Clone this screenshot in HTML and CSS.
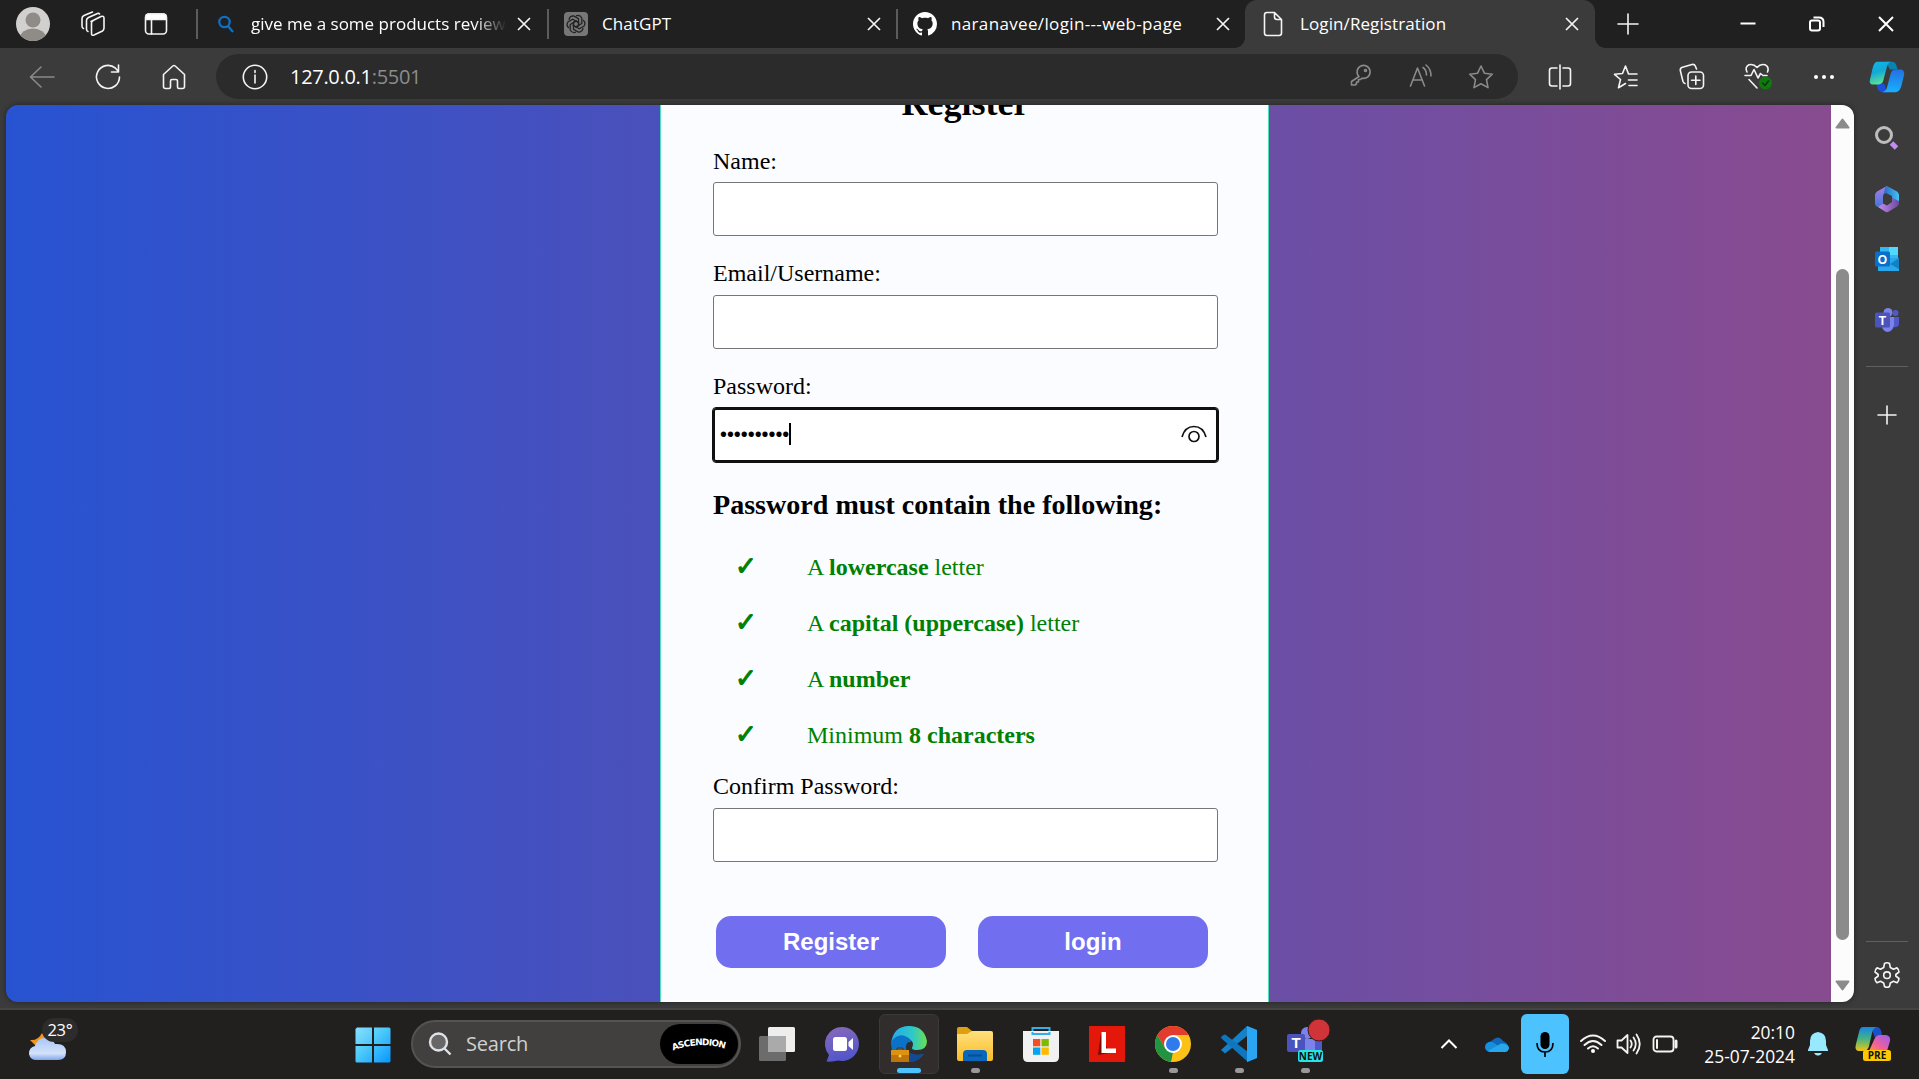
FILE: index.html
```html
<!DOCTYPE html>
<html lang="en">
<head>
<meta charset="utf-8">
<title>Login/Registration</title>
<link rel="stylesheet" href="styles.css">
</head>
<body>
<div class="desktop">
  <header class="tabstrip">
    <div class="strip-tools">
      <svg class="avatar" width="34" height="34" viewBox="0 0 34 34"><defs><clipPath id="av"><circle cx="17" cy="17" r="17"/></clipPath></defs><g clip-path="url(#av)"><rect width="34" height="34" fill="#d2d0ce"/><circle cx="17" cy="13" r="7.500" fill="#8f8b87"/><ellipse cx="17" cy="31" rx="13" ry="9.500" fill="#8f8b87"/></g></svg>
      <svg class="line" width="26" height="26" viewBox="0 0 26 26"><path d="M11 10.500 21 5.500Q24 4.500 24 7V17Q24 19 22.500 20L14 24Q11.500 25 11.500 22.500V12Q11.500 10.500 13 9.800M8 20.500Q6.500 20 6.500 18V9.500Q6.500 7.500 8.500 6.500L17.500 2.500Q19 2 19.500 3M3.500 17.500Q2 17 2 15V7.500Q2 5.500 4 4.500L12.500 1"/></svg>
      <svg class="line" width="24" height="24" viewBox="0 0 24 24"><rect x="1.500" y="2" width="21" height="20" rx="3.500"/><path d="M2 4Q2 2 5 2H19Q22 2 22 4V7.500H2Z" fill="#fff"/><path d="M7.500 8V22"/></svg>
    </div>
    <div class="tab tab-first">
      <svg width="16" height="18" viewBox="0 0 16 18" fill="none" stroke="#0f6fc5" stroke-width="2.300"><circle cx="6.500" cy="7" r="5.200"/><path d="M10 11 15 17"/></svg>
      <span class="tab-title fade">give me a some products review</span>
      <svg class="close" width="14" height="14" viewBox="0 0 14 14"><path d="M1 1 13 13M13 1 1 13"/></svg>
    </div>
    <div class="tab">
      <svg width="24" height="24" viewBox="0 0 24 24"><rect width="24" height="24" rx="4" fill="#777"/><g fill="none" stroke="#222" stroke-width="1.300"><path id="petal" d="M12 3.800Q16 2.500 17.800 6V11.500L12 15 9 13"/><use href="#petal" transform="rotate(60 12 12)"/><use href="#petal" transform="rotate(120 12 12)"/><use href="#petal" transform="rotate(180 12 12)"/><use href="#petal" transform="rotate(240 12 12)"/><use href="#petal" transform="rotate(300 12 12)"/></g></svg>
      <span class="tab-title">ChatGPT</span>
      <svg class="close" width="14" height="14" viewBox="0 0 14 14"><path d="M1 1 13 13M13 1 1 13"/></svg>
    </div>
    <div class="tab">
      <svg width="24" height="24" viewBox="0 0 16 16"><path fill="#fff" d="M8 0C3.580 0 0 3.580 0 8c0 3.540 2.290 6.530 5.470 7.590.4.070.55-.17.55-.38 0-.19-.01-.82-.01-1.490-2.010.37-2.530-.49-2.690-.94-.09-.23-.48-.94-.82-1.130-.28-.15-.68-.52-.01-.53.63-.01 1.080.58 1.230.82.72 1.210 1.870.87 2.330.66.07-.52.28-.87.51-1.070-1.780-.2-3.640-.89-3.640-3.950 0-.87.31-1.590.82-2.150-.08-.2-.36-1.020.08-2.120 0 0 .67-.21 2.200.82.64-.18 1.320-.27 2-.27s1.360.09 2 .27c1.530-1.040 2.200-.82 2.200-.82.44 1.100.16 1.920.08 2.120.51.56.82 1.270.82 2.150 0 3.070-1.870 3.750-3.650 3.950.29.25.54.73.54 1.480 0 1.070-.01 1.930-.01 2.200 0 .21.15.46.55.38A8.010 8.010 0 0 0 16 8c0-4.420-3.580-8-8-8z"/></svg>
      <span class="tab-title repo">naranavee/login---web-page</span>
      <svg class="close" width="14" height="14" viewBox="0 0 14 14"><path d="M1 1 13 13M13 1 1 13"/></svg>
    </div>
    <div class="tab active">
      <svg class="line" width="20" height="26" viewBox="0 0 20 26"><path d="M3.500 1.500H11.500L18.500 8.500V22Q18.500 24.500 16 24.500H4Q1.500 24.500 1.500 22V4Q1.500 1.500 4 1.500M11.500 2V6Q11.500 8.500 14 8.500H18"/></svg>
      <span class="tab-title">Login/Registration</span>
      <svg class="close" width="14" height="14" viewBox="0 0 14 14"><path d="M1 1 13 13M13 1 1 13"/></svg>
    </div>
    <svg class="newtab line" width="22" height="22" viewBox="0 0 22 22"><path d="M11 1V21M1 11H21"/></svg>
    <div class="window-buttons">
      <svg width="16" height="16" viewBox="0 0 16 16"><path d="M.5 7.500H15.500" stroke="#fff" stroke-width="2"/></svg>
      <svg class="bold-line" width="16" height="16" viewBox="0 0 16 16"><rect x="1" y="4.500" width="10" height="10" rx="2"/><path d="M4.500 1.500H10Q14.500 1.500 14.500 6V11"/></svg>
      <svg class="bold-line" width="16" height="16" viewBox="0 0 16 16"><path d="M1 1 15 15M15 1 1 15"/></svg>
    </div>
  </header>

  <nav class="toolbar">
    <div class="slot"><svg class="line dim" width="26" height="24" viewBox="0 0 26 24"><path d="M25 12H2M12 2 1.500 12 12 22"/></svg></div>
    <div class="slot"><svg class="line" width="26" height="26" viewBox="0 0 26 26"><path d="M24.500 13A11.500 11.500 0 1 1 20.500 4.200L23 7M23.500 1V8H16.500"/></svg></div>
    <div class="slot"><svg class="line" width="24" height="26" viewBox="0 0 24 26"><path d="M1.500 10.500 10.800 2Q12 1 13.200 2L22.500 10.500V22.500Q22.500 24.500 20.500 24.500H17Q15.500 24.500 15.500 23V17Q15.500 15.500 14 15.500H10Q8.500 15.500 8.500 17V23Q8.500 24.500 7 24.500H3.500Q1.500 24.500 1.500 22.500Z"/></svg></div>
    <div class="address">
      <svg class="line" width="26" height="26" viewBox="0 0 26 26"><circle cx="13" cy="13" r="11.700"/><path d="M13 11V19M13 6.500V8.500"/></svg>
      <span class="url">127.0.0.1<span class="port">:5501</span></span>
      <div class="address-tools">
        <div><svg class="line dim" width="22" height="22" viewBox="0 0 22 22"><path d="M9 12.500A6.500 6.500 0 1 1 12 14.200L10.500 15.500H8.500V18H6.500V20L5 21H1.500V17.500Z"/><circle cx="15.500" cy="6.500" r="1"/></svg></div>
        <div><svg class="line dim" width="24" height="24" viewBox="0 0 24 24"><path d="M1.500 22 8.500 4 15.500 22M4 16H13M14 3.500Q17.500 6 17.500 11M17 1Q22 5 22 12"/></svg></div>
        <div><svg class="line dim" width="26" height="26" viewBox="0 0 26 26"><path d="M13 2 16.400 9.200 24.300 10.200 18.500 15.700 20 23.600 13 19.800 6 23.600 7.500 15.700 1.700 10.200 9.600 9.200Z"/></svg></div>
      </div>
    </div>
    <div class="slot"><svg class="line" width="24" height="26" viewBox="0 0 24 26"><path d="M12 1V25M9 4H4Q1.500 4 1.500 6.500V19.500Q1.500 22 4 22H9M15 4H20Q22.500 4 22.500 6.500V19.500Q22.500 22 20 22H15"/></svg></div>
    <div class="slot"><svg class="line" width="26" height="26" viewBox="0 0 26 26"><path d="M24 10H15.500L12.500 2 9.500 9.500 1.500 10.300 7.500 15.500 5.500 23.800 12.500 19.500M15.500 16H24M16 21.500H24"/></svg></div>
    <div class="slot"><svg class="line" width="26" height="27" viewBox="0 0 26 27"><rect x="9" y="9" width="15.500" height="16.500" rx="3.500"/><path d="M16.800 13V21.500M12.500 17.300H21M6 20.500Q4.500 20 4 18.500L1.300 7.500Q1 5 3.500 4.300L13 1.500Q15.500 1 16.300 3L17.500 6"/></svg></div>
    <div class="slot"><svg class="line" width="28" height="27" viewBox="0 0 28 27"><path d="M3 9Q.5 4 5 1.800 9.500.5 13 4.500 16.500.5 21 1.800 25.500 4 23.500 9M1 12.500H7L10 6.500 14 15 16.500 10.500 19 12.500H23M5 16.500 13 25"/><circle cx="21.500" cy="20" r="6.500" fill="#0f7b0f" stroke="none"/><path d="M18.500 20 21 22.500 24.500 18" stroke="#0a3a0a"/></svg></div>
    <div class="slot"><svg width="22" height="6" viewBox="0 0 22 6" fill="#fff"><circle cx="3" cy="3" r="2"/><circle cx="11" cy="3" r="2"/><circle cx="19" cy="3" r="2"/></svg></div>
    <div class="slot last"><svg width="36" height="34" viewBox="0 0 38 34"><defs><linearGradient id="cp1" x2=".3" y2="1"><stop stop-color="#12b4ec"/><stop offset=".5" stop-color="#12a9d5"/><stop offset="1" stop-color="#5be095"/></linearGradient><linearGradient id="cp2" x2="0" y2="1"><stop stop-color="#2370e0"/><stop offset="1" stop-color="#18b0ff"/></linearGradient></defs><path d="M18 1H24Q28 1 29 5L30 9H22Z" fill="#0784b4"/><path d="M19 33H14Q10 33 9 29L8 24H16Z" fill="#1b50dd"/><path d="M9 1H23Q20 2 19 6L15 21Q14 25 9 25H4Q0 25 1 20L4 7Q5.500 1 9 1Z" fill="url(#cp1)"/><path d="M28 9H33Q38 9 37 15L34 27Q32 33 28 33H14Q18 32 19 28L23 13Q24 9 28 9Z" fill="url(#cp2)"/></svg></div>
  </nav>

  <main class="browser-body">
    <div class="viewport">
      <div class="page">
        <form class="card">
          <h2>Register</h2>
          <div class="field"><label>Name:</label><div class="input"></div></div>
          <div class="field raised"><label>Email/Username:</label><div class="input"></div></div>
          <div class="field raised"><label>Password:</label><div class="input focused"><span class="dots">••••••••••</span><svg width="26" height="18" viewBox="0 0 26 18" fill="none" stroke="#111" stroke-width="1.700"><path d="M1 12Q4 1.500 13 1.500T25 12"/><circle cx="13" cy="11.500" r="5"/></svg></div></div>
          <h3>Password must contain the following:</h3>
          <ul class="rules">
            <li><span>A <b>lowercase</b> letter</span></li>
            <li><span>A <b>capital (uppercase)</b> letter</span></li>
            <li><span>A <b>number</b></span></li>
            <li><span>Minimum <b>8 characters</b></span></li>
          </ul>
          <div class="field raised"><label>Confirm Password:</label><div class="input"></div></div>
          <div class="actions"><button type="button">Register</button><button type="button">login</button></div>
        </form>
      </div>
      <div class="scrollbar">
        <svg width="15" height="11" viewBox="0 0 15 11"><path d="M7.500 1.500 13.500 9.500H1.500Z" fill="#8b8b8b" stroke="#8b8b8b" stroke-width="2" stroke-linejoin="round"/></svg>
        <div class="thumb"></div>
        <svg width="15" height="11" viewBox="0 0 15 11"><path d="M7.500 9.500 13.500 1.500H1.500Z" fill="#8b8b8b" stroke="#8b8b8b" stroke-width="2" stroke-linejoin="round"/></svg>
      </div>
    </div>
    <aside class="sidebar">
      <div class="side-slot"><svg width="26" height="26" viewBox="0 0 26 26" fill="none"><circle cx="10" cy="10" r="7.500" stroke="#bdbdbd" stroke-width="3"/><path d="M17.500 18 22.500 23" stroke="#c28cf0" stroke-width="5"/></svg></div>
      <div class="side-slot"><svg width="26" height="28" viewBox="0 0 26 28"><defs><linearGradient id="ma" x2="0" y2="1"><stop stop-color="#b07be6"/><stop offset="1" stop-color="#3e79d8"/></linearGradient><linearGradient id="mb"><stop stop-color="#2c66c4"/><stop offset="1" stop-color="#3fc3f5"/></linearGradient><linearGradient id="mc"><stop stop-color="#c58bf0"/><stop offset="1" stop-color="#6b4a9c"/></linearGradient></defs><path d="M13 1 3 6.500Q1 8 1 10V18Q1 21 4 22L9 19V11Q9 9 13 6Z" fill="url(#ma)"/><path d="M13 1 23 6.500Q25 8 25 10V17L18 13V11L12 8 9.500 9.500 11 3Z" fill="url(#mb)"/><path d="M4 22 9 18.500 13 20.500 18 17V13L25 16V18Q25 20 23 21.500L14 27Q12.500 27.500 11 26.500Z" fill="url(#mc)"/></svg></div>
      <div class="side-slot"><svg width="24" height="24" viewBox="0 0 24 24"><rect x="5" y="0" width="18" height="15" fill="#35b8f1"/><path d="M14 0H23V8H14Z" fill="#50d9ff"/><path d="M3 11H24V24H3Z" fill="#28a8ea"/><path d="M24 11V22L15 17Z" fill="#1180c4"/><rect x="0" y="4.500" width="15" height="15" rx="1.500" fill="#0a6fc9"/><text x="7.500" y="16.500" class="glyph">O</text></svg></div>
      <div class="side-slot"><svg width="24" height="24" viewBox="0 0 24 24"><circle cx="13" cy="4.500" r="4.500" fill="#7b83eb"/><circle cx="20.500" cy="5" r="3" fill="#5059c9"/><path d="M17 9H24V16Q23 20 18 19Z" fill="#5059c9"/><path d="M7 9H19V17Q18 23.500 12 24 8 23 7 19Z" fill="#7b83eb"/><rect x="0" y="4.500" width="15" height="15" rx="1.500" fill="#4b53bc"/><text x="7.500" y="16.500" class="glyph">T</text></svg></div>
      <hr>
      <div class="side-plus"><svg class="line" width="18" height="18" viewBox="0 0 18 18"><path d="M9 0V18M0 9H18"/></svg></div>
      <hr class="bottom-rule">
      <div class="side-gear"><svg class="line" width="26" height="28" viewBox="0 0 26 28"><path d="M10.500 2.500Q13 1 15.500 2.500L16.300 6.500 19.500 8.300 23 6.800Q25 8.500 25 11L21.800 13.500V15L25 17.500Q25 20 23 21.800L19.500 20.200 16.300 22 15.500 25.500Q13 27 10.500 25.500L9.700 22 6.500 20.200 3 21.800Q1 20 1 17.500L4.200 15V13.500L1 11Q1 8.500 3 6.800L6.500 8.300 9.700 6.500Z"/><circle cx="13" cy="14.200" r="3.300"/></svg></div>
    </aside>
  </main>

  <footer class="taskbar">
    <div class="weather">
      <svg width="38" height="30" viewBox="0 0 38 30"><defs><linearGradient id="cl" x2="0" y2="1"><stop stop-color="#a9c6f6"/><stop offset=".7" stop-color="#d3e2fb"/><stop offset="1" stop-color="#82a5e8"/></linearGradient></defs><path d="M1 8Q9 9 13 1 19 8 15 15L7 14Z" fill="#f2951c"/><path d="M8 28A7 7 0 0 1 6 14Q9 5 17 6 24 7 26 12 37 11 37 20 37 28 29 28Z" fill="url(#cl)"/></svg>
      <span class="temp">23°</span>
    </div>
    <svg class="start" width="36" height="36" viewBox="0 0 36 36"><defs><linearGradient id="win" x2="1" y2="1"><stop stop-color="#8be0ff"/><stop offset=".45" stop-color="#4cc9fa"/><stop offset="1" stop-color="#0896ff"/></linearGradient></defs><path d="M2 .5H17V17H.5V2ZM19 .5H34Q35.500.5 35.500 2V17H19ZM.5 19H17V35.500H2Q.5 35.500.5 34ZM19 19H35.500V34Q35.500 35.500 34 35.500H19Z" fill="url(#win)"/></svg>
    <div class="search">
      <svg width="24" height="24" viewBox="0 0 24 24" fill="#686666" stroke="#dfe3e8" stroke-width="2.400"><circle cx="10.500" cy="10" r="8.500"/><path d="M16.500 16.500 22.500 22.500"/></svg>
      <span>Search</span>
      <svg class="brand" width="78" height="40" viewBox="0 0 78 40"><rect width="78" height="40" rx="20"/><path id="arc" d="M13 26.500Q39 16.500 66 25" fill="none"/><text class="brand-text"><textPath href="#arc" textLength="53">ASCENDION</textPath></text></svg>
    </div>
    <div class="apps">
      <div class="app"><svg width="36" height="36" viewBox="0 0 36 36"><rect x="9" y="1" width="27" height="25" rx="1.500" fill="#eee"/><rect x="0" y="10" width="27" height="25" rx="1.500" fill="#6c6c6c"/><path d="M9 10H27V26H9Z" fill="#aaa"/></svg></div>
      <div class="app"><svg width="36" height="36" viewBox="0 0 36 36"><defs><linearGradient id="ch" x2=".3" y2="1"><stop stop-color="#8a6ab8"/><stop offset="1" stop-color="#5356cb"/></linearGradient></defs><path d="M18 1A17 17 0 1 1 13 34.500Q8 36 1.500 35.500L4 29A17 17 0 0 1 18 1Z" fill="url(#ch)"/><rect x="8" y="11" width="14" height="14" rx="2.500" fill="#fff"/><path d="M23.500 16 28 12V24L23.500 20Z" fill="#fff"/></svg></div>
      <div class="app current"><svg width="36" height="36" viewBox="0 0 36 36"><defs><linearGradient id="ed"><stop stop-color="#24a9ec"/><stop offset=".6" stop-color="#2fc8c8"/><stop offset="1" stop-color="#6be04e"/></linearGradient></defs><path d="M0 18Q2 0 18 0 33 0 36 15 36 24 26 24 21 24 21 22 24 16 18 13 9 8 0 18Z" fill="url(#ed)"/><path d="M0 16Q7 6 16 11 20 13 20 16 14 15 15 24 20 31 33 28 26 37 16 36 0 34 0 16Z" fill="#0a73c8"/><path d="M15 20Q16 31 33 28 26 37 17 36Z" fill="#124a93"/><rect y="24" width="18" height="12" fill="#bd740c"/><rect y="24" width="18" height="5" fill="#de920f"/><circle cx="9" cy="30" r="1.500" fill="#ffd83d"/><path d="M6 24V22H12V24" fill="none" stroke="#5d3305"/></svg></div>
      <div class="app running"><svg width="36" height="36" viewBox="0 0 36 36"><defs><linearGradient id="fo" x2="0" y2="1"><stop stop-color="#ffe07c"/><stop offset="1" stop-color="#fabc28"/></linearGradient></defs><path d="M0 3Q0 1 2 1H10L15 5V12H0Z" fill="#dda012"/><path d="M0 8H10L15 5H34Q36 5 36 7V33Q36 35 34 35H2Q0 35 0 33Z" fill="url(#fo)"/><path d="M6 35V28Q6 24 10 24H26Q30 24 30 28V35Z" fill="#0a68bc"/><path d="M11 29.500H25" stroke="#064d91" stroke-width="2"/></svg></div>
      <div class="app"><svg width="36" height="36" viewBox="0 0 36 36"><path d="M9.500 8V2H26.500V8" fill="none" stroke="#35aee8" stroke-width="2"/><path d="M0 5H36V31Q36 36 31 36H5Q0 36 0 31Z" fill="#f1f1f1"/><path d="M9.500 6V8H26.500V6" fill="none" stroke="#35aee8" stroke-width="2"/><path d="M10 13H17.300V20.300H10Z" fill="#f25022"/><path d="M18.500 13H25.800V20.300H18.500Z" fill="#7fba00"/><path d="M10 21.500H17.300V28.800H10Z" fill="#00a4ef"/><path d="M18.500 21.500H25.800V28.800H18.500Z" fill="#ffb900"/></svg></div>
      <div class="app"><svg width="36" height="36" viewBox="0 0 36 36"><path d="M0 0H36V36H0Z" fill="#e3170a"/><path d="M12 7 9 29 20 27Z" fill="#7c0905"/><path d="M12.500 6H17V22.500H27V27H12.500Z" fill="#fff"/></svg></div>
      <div class="app running"><svg width="36" height="36" viewBox="0 0 36 36"><circle cx="18" cy="18" r="18" fill="#fbc116"/><path d="M2.400 9A18 18 0 0 1 33.600 9H18L10.200 22.500Z" fill="#e33b2e"/><path d="M2.400 9 10.200 22.500 18 27 16.500 36A18 18 0 0 1 2.400 9Z" fill="#229342"/><path d="M18 27 25.800 22.500 18 36H16Z" fill="#fbc116"/><circle cx="18" cy="18" r="9" fill="#fff"/><circle cx="18" cy="18" r="7" fill="#2f7bee"/></svg></div>
      <div class="app running"><svg width="36" height="36" viewBox="0 0 36 36"><path d="M26 0 36 4V32L26 36V27L4 9 0 12Q-.5 10 4 8.500L26 26Z" fill="#0b78c0"/><path d="M0 24 26 0V10L4 27.500Z" fill="#1481c9"/><path d="M0 12 4 8.500 27 26V36Z" fill="#0d76bf"/><path d="M26 0 36 4V32L26 36Z" fill="#29a5f3"/></svg></div>
      <div class="app running teams"><svg width="46" height="44" viewBox="0 0 46 44"><circle cx="20" cy="14" r="6" fill="#7b83eb"/><rect x="18" y="20" width="17" height="14" fill="#7b83eb"/><rect x="28" y="20" width="7" height="12" fill="#5059c9"/><rect y="15" width="18" height="18" rx="2" fill="#4b53bc"/><text x="9" y="29" class="glyph large">T</text><circle cx="32" cy="11" r="11" fill="#d13438" stroke="#3c1b1c"/><rect x="11" y="31" width="25" height="12" rx="2.500" fill="#28e5e5"/><text x="23.500" y="40.500" class="badge-text">NEW</text></svg></div>
    </div>
    <div class="tray">
      <svg class="chevron bold-line" width="18" height="12" viewBox="0 0 18 12"><path d="M1.500 10 9 2.500 16.500 10"/></svg>
      <svg class="cloud" width="24" height="17" viewBox="0 0 24 17"><path d="M5 16A5 5 0 0 1 3 6.500Q7 5 9 3 14-1 18 5 23 7 24 12 23 16 20 16Z" fill="#0f67b8"/><path d="M1 8Q5 4 10 7.500L20 16H5Q-2 14 1 8Z" fill="#1490df"/><path d="M3 15 16 7.500Q23 7 24 12 23 16 20 16H5Z" fill="#28a8ea"/></svg>
      <div class="mic"><svg width="18" height="25" viewBox="0 0 18 25"><rect x="4.500" width="9" height="17" rx="4.500"/><path d="M1 11Q1 20 9 20T17 11M9 20V25" fill="none" stroke="#000" stroke-width="1.700"/></svg></div>
      <div class="status">
        <svg class="line" width="26" height="20" viewBox="0 0 26 20"><path d="M1 7Q13-4 25 7M4.500 11Q13 3 21.500 11M8 14.500Q13 10 18 14.500" stroke-width="2"/><circle cx="13" cy="17" r="2" fill="#fff" stroke="none"/></svg>
        <svg class="line" width="26" height="22" viewBox="0 0 26 22"><path d="M1.500 7.500H5.500L11.500 2V20L5.500 14.500H1.500ZM14.500 7.500Q17 11 14.500 14.500M17.500 4.500Q22 11 17.500 17.500M20.500 1.500Q27 11 20.500 20.500" stroke-width="1.800"/></svg>
        <svg class="line" width="26" height="18" viewBox="0 0 26 18"><rect x="1.500" y="1.500" width="20" height="15" rx="3" stroke-width="1.800"/><path d="M5 5V13" stroke-width="2"/><path d="M24 6V12" stroke-width="3"/></svg>
      </div>
      <div class="clock"><span>20:10</span><span>25-07-2024</span></div>
      <svg class="bell" width="20" height="24" viewBox="0 0 20 24" fill="#98e8ff"><path d="M10 0Q18 1 18 9V13L20 18V19H0V18L2 13V9Q2 1 10 0ZM6 21H14Q12 24 10 23.500 8 24 6 21Z"/></svg>
      <svg class="pre" width="36" height="36" viewBox="0 0 36 36"><defs><linearGradient id="p1" x2="0" y2="1"><stop stop-color="#1685ea"/><stop offset=".5" stop-color="#45b480"/><stop offset="1" stop-color="#f2c514"/></linearGradient><linearGradient id="p2" x1="1" x2="0" y2="1"><stop stop-color="#9b5cf2"/><stop offset=".6" stop-color="#f0609b"/><stop offset="1" stop-color="#ff923c"/></linearGradient></defs><path d="M16 1H22Q26 1 27 9L20 12Z" fill="#1d4fc9"/><path d="M8 1H22Q18 2 17 7L14 20Q13 25 8 25H4Q-1 25 1 18L4 6Q5 1 8 1Z" fill="url(#p1)"/><path d="M25 9H31Q36 10 35 15L32 25H14L19 14Q21 9 25 9Z" fill="url(#p2)"/><rect x="8" y="24" width="28" height="11" rx="2.500" fill="#ffc800"/><text x="22" y="33" class="badge-text">PRE</text></svg>
    </div>
  </footer>
</div>
</body>
</html>
```
FILE: styles.css
```css
* { box-sizing: border-box; }
body { margin: 0; overflow: hidden; font-family: "Open Sans", "Noto Sans", sans-serif; color: #fff; }
svg { display: block; flex: none; overflow: visible; }
.desktop { width: 1919px; height: 1079px; display: flex; flex-direction: column; background: #3b3b3b; }
.line { fill: none; stroke: #f4f4f4; stroke-width: 1.6; stroke-linejoin: round; stroke-linecap: round; }
.line.dim { stroke: #8a8a8a; }
.bold-line { fill: none; stroke: #fff; stroke-width: 2; }

/* Tab strip */
.tabstrip { height: 48px; flex: none; display: flex; align-items: center; background: #202020; }
.strip-tools { width: 196px; padding-left: 16px; display: flex; align-items: center; gap: 30px; }
.strip-tools svg:last-child { margin-left: 8px; }
.tab { width: 349px; height: 30px; padding: 0 15px 0 15px; display: flex; align-items: center; gap: 14px; border-left: 2px solid #5c5c5c; font-size: 17px; }
.tab-first { width: 351px; padding-left: 20px; padding-right: 16px; gap: 8px; }
.tab-first .tab-title { padding-left: 9px; letter-spacing: 0; }
.tab-title { flex: 1; white-space: nowrap; line-height: 28px; letter-spacing: 0.1px; }
.tab-title.repo { letter-spacing: 0.35px; }
.fade { -webkit-mask-image: linear-gradient(to right, #000 87%, transparent 99%); mask-image: linear-gradient(to right, #000 87%, transparent 99%); }
.close { fill: none; stroke: #f4f4f4; stroke-width: 1.7; }
.active { position: relative; width: 350px; height: 48px; padding: 0 16px 0 18px; gap: 17px; border: 0; border-radius: 12px 12px 0 0; background: #3b3b3b; }
.active::before, .active::after { content: ""; position: absolute; bottom: 0; width: 10px; height: 10px; }
.active::before { left: -10px; background: radial-gradient(circle at 0 0, #202020 9.5px, #3b3b3b 10px); }
.active::after { right: -10px; background: radial-gradient(circle at 100% 0, #202020 9.5px, #3b3b3b 10px); }
.newtab { margin-left: 22px; }
.window-buttons { margin-left: auto; margin-right: 25px; display: flex; gap: 53px; }

/* Toolbar */
.toolbar { height: 57px; flex: none; display: flex; align-items: center; padding-left: 9px; }
.slot { width: 66px; display: flex; justify-content: center; }
.slot.last { width: 60px; }
.address { width: 1302px; height: 45px; margin: 0 9px; padding: 0 7px 0 26px; display: flex; align-items: center; border-radius: 23px; background: #2b2b2b; }
.url { flex: 1; padding-left: 22px; font-size: 20px; line-height: 28px; letter-spacing: -0.3px; }
.port { color: #8c8c8c; }
.address-tools { display: flex; }
.address-tools div { width: 60px; display: flex; justify-content: center; }

/* Page area */
.browser-body { height: 903px; flex: none; display: flex; padding: 0 0 6px 6px; }
.viewport { width: 1848px; display: flex; border-radius: 12px; overflow: hidden; box-shadow: 0 0 5px #222; }
.page { width: 1825px; height: 897px; padding-left: 654px; overflow: hidden; background: linear-gradient(90deg, #2753d2 0%, #4b50bb 36%, #6a4fa6 69%, #7f4c97 89%, #884b8f 100%); }
.card { display: flow-root; width: 609px; height: 897px; padding: 0 50px 0 52px; border: solid #50e0b8; border-width: 0 1px; background: #fbfcff; color: #000; font: 24px/28px "Liberation Serif", serif; }
.card h2 { margin: -22px 0 24px; font-size: 36px; line-height: 40px; text-align: center; }
.field { display: flex; flex-direction: column; gap: 7px; margin-bottom: 24px; }
.raised { gap: 8px; margin-top: -1px; }
.input { width: 505px; height: 54px; display: flex; align-items: center; justify-content: space-between; border: 1px solid #767676; border-radius: 3px; background: #fff; }
.input.focused { padding: 0 9px 2px 5px; border: 2px solid #101010; outline: 1px solid #101010; outline-offset: 0; }
.dots { border-right: 2px solid #000; font: 19.8px/22px "Liberation Sans", sans-serif; }
.card h3 { margin: 27px 0 32px; font-size: 28.08px; line-height: 32px; }
.rules { margin: 0 0 24px; padding: 0; list-style: none; color: #008000; display: flex; flex-direction: column; gap: 28px; }
.rules li { height: 28px; display: flex; padding-left: 22px; }
.rules li::before { content: "✓"; width: 72px; font: bold 26px/26px "DejaVu Sans", sans-serif; -webkit-text-stroke: 1.1px #008000; }
.actions { display: flex; gap: 32px; margin-top: 54px; padding-left: 3px; }
.actions button { width: 230px; height: 52px; padding: 0; border: 0; border-radius: 15px; background: #716fef; color: #fff; font: bold 24px "Liberation Sans", sans-serif; }
.scrollbar { width: 23px; display: flex; flex-direction: column; align-items: center; padding: 13px 0 11px; background: #fcfcfc; }
.thumb { width: 13px; height: 671px; margin: 140px 0 40px; border-radius: 7px; background: #8b8b8b; }

/* Edge sidebar */
.sidebar { width: 65px; height: 897px; display: flex; flex-direction: column; align-items: center; padding-top: 3px; }
.side-slot { height: 60.5px; display: flex; align-items: center; }
.sidebar hr { width: 42px; height: 1px; margin: 16px 0 0; border: 0; background: #606060; }
.side-plus { margin-top: 39px; }
.sidebar .bottom-rule { margin-top: auto; }
.side-gear { margin: 19px 0 13px; }
.glyph { fill: #fff; font: bold 12px "Liberation Sans", sans-serif; text-anchor: middle; }
.glyph.large { font-size: 15px; }

/* Taskbar */
.taskbar { height: 71px; flex: none; display: flex; align-items: center; border-top: 2px solid #444; background: #221f1f; }
.weather { position: relative; width: 38px; margin-left: 29px; padding-top: 4px; }
.temp { position: absolute; left: 13px; top: -10px; width: 36px; height: 24px; border-radius: 12px; background: #2c2c2c; font-size: 16.5px; line-height: 23px; text-align: center; letter-spacing: -0.3px; }
.start { margin-left: 288px; }
.search { width: 330px; height: 48px; margin: -1px 0 0 20px; padding: 0 1px 0 15px; display: flex; align-items: center; border: 2px solid #555352; border-radius: 24px; background: #41403e; color: #d0d0d0; font-size: 20px; }
.search span { flex: 1; padding-left: 14px; line-height: 26px; letter-spacing: -0.2px; }
.brand-text { fill: #fff; font: bold 9px "DejaVu Sans", sans-serif; }
.apps { display: flex; margin: -1px 0 0 3px; }
.app { position: relative; width: 60px; height: 60px; margin: 0 3px; display: flex; align-items: center; justify-content: center; border-radius: 6px; }
.current { border: 1px solid #3b3837; background: #302d2c; }
.running::after, .current::after { content: ""; position: absolute; left: 50%; bottom: 1px; width: 9px; height: 5px; margin-left: -4.5px; border-radius: 3px; background: #999; }
.current::after { width: 24px; margin-left: -12px; bottom: 0; background: #4cc2ff; }
.teams svg { margin: -7px 0 0 10px; }
.badge-text { fill: #111; font: bold 10px "Open Sans", sans-serif; text-anchor: middle; }
.tray { display: flex; align-items: center; margin: -1px 0 0 102px; }
.cloud { margin-left: 27px; }
.mic { width: 48px; height: 60px; margin-left: 12px; display: flex; align-items: center; justify-content: center; border-radius: 6px; background: #4cc2ff; }
.status { display: flex; align-items: center; gap: 10px; margin-left: 11px; }
.clock { width: 117px; display: flex; flex-direction: column; align-items: flex-end; font-size: 17.4px; line-height: 24px; }
.bell { margin-left: 13px; }
.pre { margin-left: 27px; }
```
